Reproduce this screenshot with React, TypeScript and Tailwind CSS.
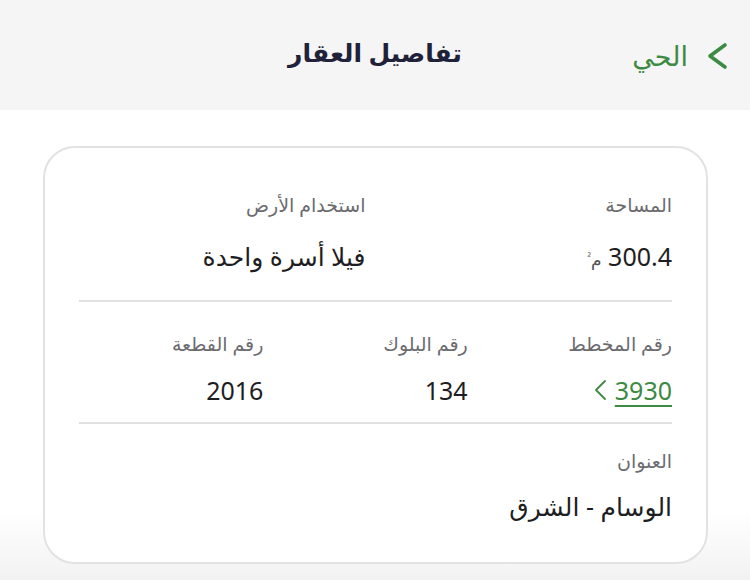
const font = { fontFamily: '"Noto Sans", "DejaVu Sans", sans-serif' };

function Label({ children }: { children: React.ReactNode }) {
  return <div className="text-[19px] leading-[30px] text-[#6b6b70]">{children}</div>;
}

function Value({ children }: { children: React.ReactNode }) {
  return <div className="text-[25px] leading-[36px] text-[#1e1e22]">{children}</div>;
}

export default function App() {
  return (
    <div dir="rtl" style={font} className="w-[750px] h-[580px] bg-white overflow-hidden">
      {/* header */}
      <div className="relative h-[110px] bg-[#f5f5f6] flex items-center justify-center">
        <div className="absolute right-[22px] top-[38px] flex items-center gap-[18px] text-[#3d8a43]">
          <svg width="22" height="30" viewBox="0 0 22 30" fill="none">
            <polyline points="19,4 4,15 19,26" stroke="currentColor" strokeWidth="3.6" strokeLinecap="round" strokeLinejoin="round" />
          </svg>
          <span className="text-[27px] leading-[36px]">الحي</span>
        </div>
        <h1 className="text-[25px] font-bold text-[#1f2238] leading-[36px] -mt-[6px]">تفاصيل العقار</h1>
      </div>

      {/* body */}
      <div className="h-[470px] pt-[36px] bg-[linear-gradient(to_bottom,#ffffff_85%,#f2f2f3)]">
        <div className="mr-[42px] ml-[43px] h-[418px] rounded-[32px] border-2 border-[#e2e2e4] px-[34px] bg-white">
          <div className="grid grid-cols-2 gap-x-[20px] pt-[42px] pb-[22px] border-b-2 border-[#e0e0e0]">
            <div>
              <Label>المساحة</Label>
              <div className="mt-[18px]">
                <Value>
                  300.4 <span className="text-[17px] text-[#555]">م<sup className="text-[10px]">²</sup></span>
                </Value>
              </div>
            </div>
            <div>
              <Label>استخدام الأرض</Label>
              <div className="mt-[18px]">
                <Value>فيلا أسرة واحدة</Value>
              </div>
            </div>
          </div>

          <div className="grid grid-cols-3 gap-x-[20px] pt-[27px] pb-[14px] border-b-2 border-[#e0e0e0]">
            <div>
              <Label>رقم المخطط</Label>
              <div className="mt-[13px] flex items-center gap-[8px] text-[#3d8a43]">
                <span className="text-[25px] leading-[36px] underline underline-offset-[5px] decoration-[1.5px]">3930</span>
                <svg width="14" height="22" viewBox="0 0 14 22" fill="none">
                  <polyline points="12,2 3,11 12,20" stroke="currentColor" strokeWidth="1.8" strokeLinecap="round" strokeLinejoin="round" />
                </svg>
              </div>
            </div>
            <div>
              <Label>رقم البلوك</Label>
              <div className="mt-[13px]">
                <Value>134</Value>
              </div>
            </div>
            <div>
              <Label>رقم القطعة</Label>
              <div className="mt-[13px]">
                <Value>2016</Value>
              </div>
            </div>
          </div>

          <div className="pt-[22px]">
            <Label>العنوان</Label>
            <div className="mt-[12px]">
              <Value>الوسام - الشرق</Value>
            </div>
          </div>
        </div>
      </div>
    </div>
  );
}
